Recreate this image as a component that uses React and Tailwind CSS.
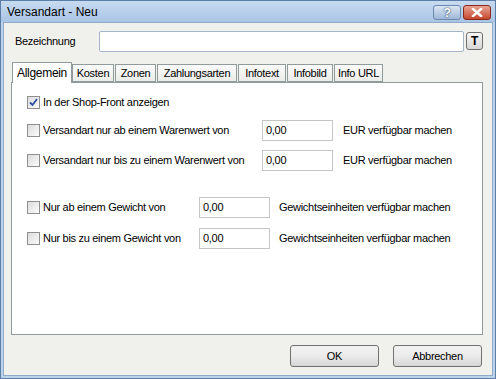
import React from 'react';

const font = { fontFamily: '"Liberation Sans", Arial, sans-serif' };

const Check = ({ checked }) => (
  <span className="w-[13px] h-[13px] border border-[#8f8f8f] bg-gradient-to-br from-[#dcdcdc] to-[#fbfbfb] flex items-center justify-center shrink-0">
    {checked && (
      <svg width="9" height="9" viewBox="0 0 9 9">
        <path d="M1 4.5 L3.5 7 L8 1" fill="none" stroke="#2b4fa0" strokeWidth="1.8" />
      </svg>
    )}
  </span>
);

const NumInput = () => (
  <div className="w-[71px] h-[21px] border border-[#c5c5c5] bg-white pl-[3px] flex items-center text-[11px] text-black shrink-0">
    0,00
  </div>
);

const Row = ({ label, mt, children }) => (
  <div className={`flex items-center h-[21px] ${mt}`}>
    <Check />
    <span className="ml-[3px] w-[149px] whitespace-nowrap">{label}</span>
    {children}
  </div>
);

const Btn = ({ children }) => (
  <button className="w-[89px] h-[22px] rounded-[3px] border border-[#707070] bg-gradient-to-b from-[#f2f2f2] via-[#ebebeb] to-[#d6d6d6] text-[11px] text-black">
    {children}
  </button>
);

export default function App() {
  const tabs = [
    ['Kosten', 'w-[42px]'],
    ['Zonen', 'w-[41px]'],
    ['Zahlungsarten', 'w-[80px]'],
    ['Infotext', 'w-[48px]'],
    ['Infobild', 'w-[46px]'],
    ['Info URL', 'w-[49px]'],
  ];
  return (
    <div style={font} className="w-[496px] h-[379px] bg-[#bdd3ec] border border-[#5b7ea8] flex flex-col text-[11px] tracking-[-0.3px] text-black overflow-hidden">
      {/* title bar */}
      <div className="h-[21px] shrink-0 bg-gradient-to-b from-[#c8dbf0] to-[#a9c4e5] flex items-center pl-[6px] pr-[4px]">
        <span className="text-[12px] tracking-normal text-black flex-1">Versandart - Neu</span>
        <div className="flex gap-[2px] mt-[2px]">
          <div className="w-[28px] h-[15px] rounded-[3px] border border-[#6d89ad] bg-gradient-to-b from-[#dbe6f3] to-[#9fb8d8] flex items-center justify-center">
            <span className="text-white font-bold text-[12px] leading-none [text-shadow:0_0_2px_#3d5274,0_0_1px_#3d5274]">?</span>
          </div>
          <div className="w-[28px] h-[15px] rounded-[3px] border border-[#8a2a1c] bg-gradient-to-b from-[#e8a493] to-[#c4452c] flex items-center justify-center">
            <svg width="12" height="9" viewBox="0 0 12 9">
              <path d="M2 1 L10 8 M10 1 L2 8" stroke="white" strokeWidth="2.4" strokeLinecap="square" />
            </svg>
          </div>
        </div>
      </div>

      {/* body */}
      <div className="flex-1 mx-[2px] mb-[2px] bg-[#f0f0ec] flex flex-col pl-[7px] pr-[9px] border border-[#8fa9c8]">
        <div className="flex items-center mt-[8px] h-[20px]">
          <span className="w-[88px] pl-[4px]">Bezeichnung</span>
          <div className="w-[365px] h-[21px] border border-[#a6b5c9] rounded-[2px] bg-white" />
          <div className="ml-[2px] w-[17px] h-[18px] rounded-[3px] border border-[#6f6f6f] bg-gradient-to-b from-[#f6f6f6] to-[#d8d8d8] flex items-center justify-center font-bold text-[12px] leading-none">T</div>
        </div>

        {/* tabs */}
        <div className="flex items-end mt-[10px] h-[21px] relative z-10 pl-[1px]">
          <div className="h-[21px] w-[60px] -mr-[1px] bg-white border border-b-0 border-[#919b9c] flex items-center justify-center text-[12px] mb-[-1px]">Allgemein</div>
          {tabs.map(([t, w]) => (
            <div key={t} className={`h-[18px] ml-[1px] ${w} border border-[#919b9c] bg-gradient-to-b from-[#fafafa] to-[#ececea] flex items-center justify-center text-[11px] whitespace-nowrap`}>
              {t}
            </div>
          ))}
        </div>

        {/* panel */}
        <div className="h-[253px] w-[472px] bg-white border border-[#919b9c] pl-[15px] flex flex-col">
          <div className="flex items-center h-[13px] mt-[13px]">
            <Check checked />
            <span className="ml-[3px]">In der Shop-Front anzeigen</span>
          </div>
          <Row label="Versandart nur ab einem Warenwert von" mt="mt-[11px]">
            <span className="w-[70px]" />
            <NumInput />
            <span className="ml-[10px]">EUR verfügbar machen</span>
          </Row>
          <Row label="Versandart nur bis zu einem Warenwert von" mt="mt-[9px]">
            <span className="w-[70px]" />
            <NumInput />
            <span className="ml-[10px]">EUR verfügbar machen</span>
          </Row>
          <Row label="Nur ab einem Gewicht von" mt="mt-[26px]">
            <span className="w-[7px]" />
            <NumInput />
            <span className="ml-[9px]">Gewichtseinheiten verfügbar machen</span>
          </Row>
          <Row label="Nur bis zu einem Gewicht von" mt="mt-[10px]">
            <span className="w-[7px]" />
            <NumInput />
            <span className="ml-[9px]">Gewichtseinheiten verfügbar machen</span>
          </Row>
        </div>

        <div className="flex justify-end gap-[14px] mt-[10px] pr-[1px]">
          <Btn>OK</Btn>
          <Btn>Abbrechen</Btn>
        </div>
      </div>
    </div>
  );
}
